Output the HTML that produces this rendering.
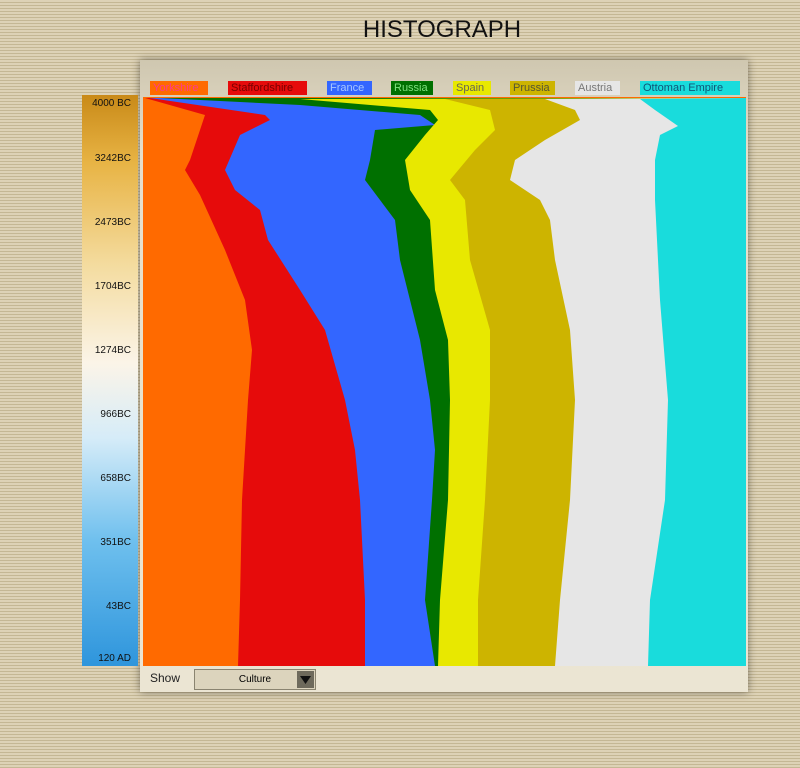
<!DOCTYPE html>
<html><head><style>
body{margin:0;width:800px;height:768px;overflow:hidden;background:#cfc3a2;position:relative;font-family:"Liberation Sans",sans-serif;
background-image:repeating-linear-gradient(0deg,#c4b794 0 1px,#ddd2b6 1px 3px);}
.title{position:absolute;left:0;width:884px;top:16px;text-align:center;font-size:24px;letter-spacing:0px;color:#111;}
.panel{position:absolute;left:140px;top:60px;width:608px;height:632px;background:linear-gradient(180deg,#cfc7b0,#e6dfcb 15%,#ebe5d3);box-shadow:0 0 8px rgba(0,0,0,.45);}
.bar{position:absolute;left:82px;top:95px;width:56px;height:571px;background:linear-gradient(180deg,#c98a18 0%,#e8b445 12%,#f4dca0 30%,#fbf4e8 47%,#d6ecf8 60%,#6fc0ee 78%,#2e95dc 100%);}
.yl{position:absolute;right:669px;font-size:10px;color:#111;}
.lab{position:absolute;top:81px;height:14px;font-size:11px;line-height:14px;padding:0 3px;}
svg{position:absolute;left:0;top:0}
.show{position:absolute;left:150px;top:671px;font-size:12px;color:#222}
.sel{position:absolute;left:194px;top:669px;width:122px;height:21px;background:#dcd4bd;border:1px solid #8a8470;box-sizing:border-box;font-size:10px;text-align:center;line-height:19px;}
.arr{position:absolute;right:1px;top:1px;width:17px;height:17px;background:#6e6a5c;}
</style></head><body>
<div class="title">HISTOGRAPH</div>
<div class="panel"></div>
<div class="bar"></div>
<div class="yl" style="top:98px">4000 BC</div>
<div class="yl" style="top:153px">3242BC</div>
<div class="yl" style="top:217px">2473BC</div>
<div class="yl" style="top:281px">1704BC</div>
<div class="yl" style="top:345px">1274BC</div>
<div class="yl" style="top:409px">966BC</div>
<div class="yl" style="top:473px">658BC</div>
<div class="yl" style="top:537px">351BC</div>
<div class="yl" style="top:601px">43BC</div>
<div class="yl" style="top:653px">120 AD</div>
<svg width="800" height="768">
<rect x="143" y="97" width="603" height="569" fill="#ff6a00"/>
<polygon fill="#e60b0b" points="145,98 205,115 200,130 190,160 185,170 200,195 225,250 245,300 252,350 248,400 242,500 240,600 238,666 746,666 746,98"/>
<polygon fill="#3366ff" points="150,98 265,115 270,120 240,135 225,170 235,190 260,210 268,240 300,290 325,330 345,400 355,450 360,500 365,600 365,666 746,666 746,98"/>
<polygon fill="#007000" points="160,98 300,105 420,115 435,125 375,130 370,160 365,180 380,200 395,220 400,260 410,300 420,340 430,400 435,450 432,500 425,600 435,666 746,666 746,98"/>
<polygon fill="#e8e800" points="300,99 430,110 438,120 425,135 405,160 410,190 430,220 435,290 448,340 450,400 448,500 440,600 438,666 746,666 746,98"/>
<polygon fill="#cdb400" points="445,99 490,110 495,130 475,150 450,180 465,200 470,260 490,330 490,400 485,500 478,600 478,666 746,666 746,98"/>
<polygon fill="#e6e6e6" points="545,99 575,110 580,120 545,140 515,160 510,180 540,200 550,220 555,260 570,330 575,400 570,500 560,600 555,666 746,666 746,98"/>
<polygon fill="#19dcdc" points="640,99 655,110 678,126 660,135 655,160 655,200 660,300 668,400 665,500 650,600 648,666 746,666 746,98"/>
</svg>
<div class="lab" style="left:150px;width:52px;background:#ff6a00;color:#ff3a8a">Yorkshire</div>
<div class="lab" style="left:228px;width:73px;background:#e60b0b;color:#700">Staffordshire</div>
<div class="lab" style="left:327px;width:39px;background:#3366ff;color:#a8c8ff">France</div>
<div class="lab" style="left:391px;width:36px;background:#007000;color:#7ee07e">Russia</div>
<div class="lab" style="left:453px;width:32px;background:#e8e800;color:#665">Spain</div>
<div class="lab" style="left:510px;width:39px;background:#cdb400;color:#553">Prussia</div>
<div class="lab" style="left:575px;width:39px;background:#e6e6e6;color:#777">Austria</div>
<div class="lab" style="left:640px;width:94px;background:#19dcdc;color:#157">Ottoman Empire</div>
<div class="show">Show</div>
<div class="sel">Culture<div class="arr"><svg width="17" height="17"><polygon points="3,5 14,5 8.5,13" fill="#111"/></svg></div></div>
</body></html>
